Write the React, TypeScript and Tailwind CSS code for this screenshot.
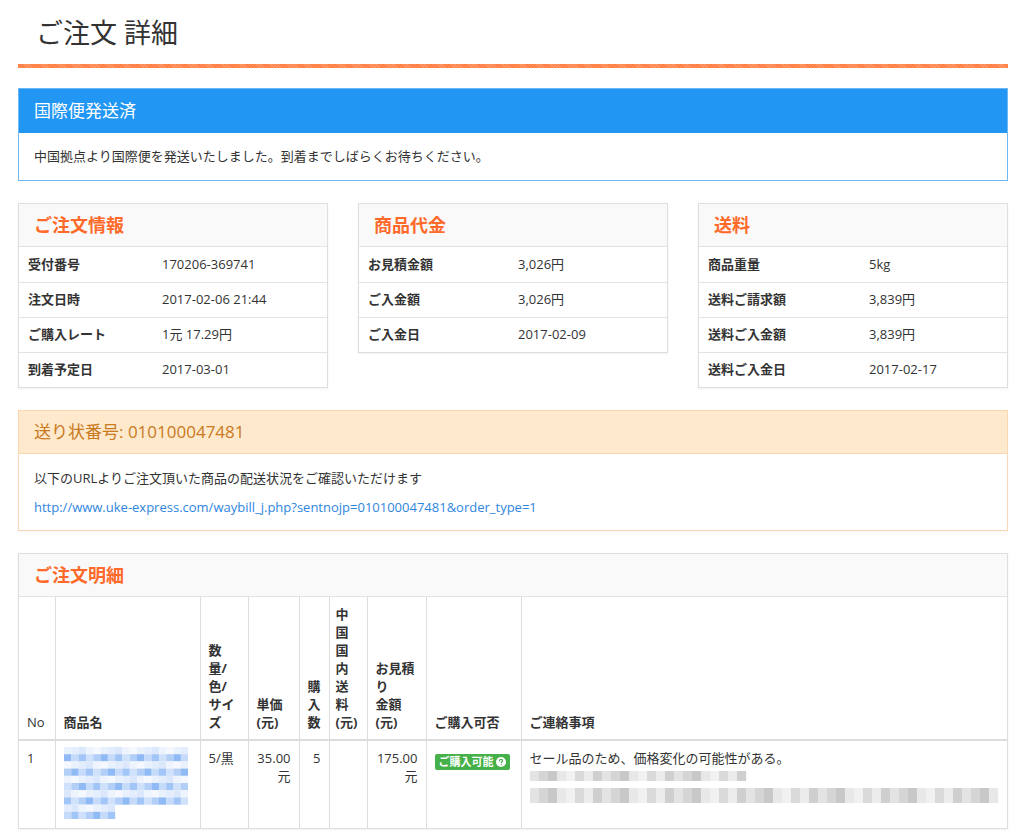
import React from "react";

type Row = { label: string; value: string };

const orderInfo: Row[] = [
  { label: "受付番号", value: "170206-369741" },
  { label: "注文日時", value: "2017-02-06 21:44" },
  { label: "ご購入レート", value: "1元 17.29円" },
  { label: "到着予定日", value: "2017-03-01" },
];

const goodsPrice: Row[] = [
  { label: "お見積金額", value: "3,026円" },
  { label: "ご入金額", value: "3,026円" },
  { label: "ご入金日", value: "2017-02-09" },
];

const shipping: Row[] = [
  { label: "商品重量", value: "5kg" },
  { label: "送料ご請求額", value: "3,839円" },
  { label: "送料ご入金額", value: "3,839円" },
  { label: "送料ご入金日", value: "2017-02-17" },
];

const InfoPanel = ({
  title,
  rows,
  labelWidth,
}: {
  title: string;
  rows: Row[];
  labelWidth: string;
}) => (
  <div className="border border-[#dedede] bg-white shadow-[0_1px_2px_rgba(0,0,0,0.06)]">
    <div className="h-[43px] px-[15px] flex items-center bg-[#f9f9f9] border-b border-[#e3e3e3]">
      <h3 className="text-[18px] font-bold text-[#ff6a2a]">{title}</h3>
    </div>
    {rows.map((r, i) => (
      <div
        key={r.label}
        className={`flex items-center h-[35px] px-[9px] ${i > 0 ? "border-t border-[#e3e3e3]" : ""}`}
      >
        <div className={`${labelWidth} font-bold`}>{r.label}</div>
        <div>{r.value}</div>
      </div>
    ))}
  </div>
);

// pixelated thumbnail of the (blurred) product name
const light = ["#eef4fe", "#e3edfd", "#f5f8fe", "#dbe8fc", "#e9f1fd"];
const strong = ["#c6dbfa", "#b3cff8", "#a2c5f7", "#8fbaf5", "#d0e1fb"];
const BlurName = () => {
  const cells: React.ReactNode[] = [];
  const cols = 17;
  const rows = 10;
  let seed = 7;
  for (let y = 0; y < rows; y++) {
    for (let x = 0; x < cols; x++) {
      if (y >= 8 && x > 6) continue;
      seed = (seed * 9301 + 49297) % 233280;
      const pal = y % 2 === 1 ? strong : light;
      const c = pal[seed % pal.length];
      cells.push(<rect key={`${x}-${y}`} x={x * 7.3} y={y * 7.2} width={7.4} height={7.3} fill={c} />);
    }
  }
  return (
    <svg width="124" height="72" viewBox="0 0 124 72" className="block">
      {cells}
    </svg>
  );
};

const grays = ["#e3e3e3", "#d5d5d5", "#ececec", "#cfcfcf", "#f1f1f1", "#dadada", "#c8c8c8", "#e8e8e8"];
const BlurLine = ({ width, height, seedStart }: { width: number; height: number; seedStart: number }) => {
  const cells: React.ReactNode[] = [];
  let seed = seedStart;
  const n = Math.floor(width / 9);
  for (let x = 0; x < n; x++) {
    seed = (seed * 9301 + 49297) % 233280;
    cells.push(<rect key={x} x={x * 9} y={0} width={9.2} height={height} fill={grays[seed % grays.length]} />);
  }
  return (
    <svg width={width} height={height} viewBox={`0 0 ${width} ${height}`} className="block">
      {cells}
    </svg>
  );
};

const th = "border border-[#dddddd] border-b-2 align-bottom text-left font-bold px-[8px] py-[8px] leading-[18px]";
const td = "border border-[#dddddd] align-top px-[8px] pt-[8px] pb-[8px] leading-[18px]";

export default function App() {
  return (
    <div className="w-[1024px] min-h-[840px] bg-white pl-[18px] pr-[16px] text-[13px] text-[#333] font-['Open_Sans','Noto_Sans_CJK_JP',sans-serif]">
      <h1 className="pt-[13px] pl-[18px] text-[27px] leading-[40px] font-normal text-[#333]">ご注文 詳細</h1>
      <div className="mt-[11px] h-[4px] bg-[#ff7f45] bg-[repeating-linear-gradient(45deg,#ff7a3c_0px,#ff7a3c_1px,#ff9a6a_1px,#ff9a6a_2px)]" />

      <div className="mt-[20px] border border-[#6fb7f4]">
        <div className="h-[44px] bg-[#2196f3] px-[15px] flex items-center">
          <h3 className="text-[17px] text-white">国際便発送済</h3>
        </div>
        <div className="h-[47px] px-[15px] flex items-center">中国拠点より国際便を発送いたしました。到着までしばらくお待ちください。</div>
      </div>

      <div className="mt-[22px] grid grid-cols-3 gap-[30px] items-start">
        <InfoPanel title="ご注文情報" rows={orderInfo} labelWidth="w-[134px]" />
        <InfoPanel title="商品代金" rows={goodsPrice} labelWidth="w-[150px]" />
        <InfoPanel title="送料" rows={shipping} labelWidth="w-[161px]" />
      </div>

      <div className="mt-[22px] border border-[#fad7b3] shadow-[0_1px_2px_rgba(0,0,0,0.04)]">
        <div className="h-[43px] bg-[#fee9cc] border-b border-[#fad7b3] px-[15px] flex items-center">
          <h3 className="text-[17px] text-[#c97a1f]">送り状番号: 010100047481</h3>
        </div>
        <div className="px-[15px] pt-[14px] pb-[13px] leading-[20px]">
          <p>以下のURLよりご注文頂いた商品の配送状況をご確認いただけます</p>
          <p className="mt-[9px]">
            <a className="text-[#2f86de]" href="#">
              http://www.uke-express.com/waybill_j.php?sentnojp=010100047481&amp;order_type=1
            </a>
          </p>
        </div>
      </div>

      <div className="mt-[22px] border border-[#dedede] shadow-[0_1px_2px_rgba(0,0,0,0.06)]">
        <div className="h-[43px] px-[15px] flex items-center bg-[#f9f9f9] border-b border-[#e3e3e3]">
          <h3 className="text-[18px] font-bold text-[#ff6a2a]">ご注文明細</h3>
        </div>
        <table className="w-full table-fixed border-collapse border-hidden">
          <colgroup>
            <col className="w-[36px]" />
            <col className="w-[145px]" />
            <col className="w-[48px]" />
            <col className="w-[51px]" />
            <col className="w-[30px]" />
            <col className="w-[38px]" />
            <col className="w-[59px]" />
            <col className="w-[95px]" />
            <col />
          </colgroup>
          <thead>
            <tr>
              <th className={`${th} !font-normal`}>No</th>
              <th className={th}>商品名</th>
              <th className={th}>
                数<br />量/<br />色/<br />サイ<br />ズ
              </th>
              <th className={th}>
                単価<br />(元)
              </th>
              <th className={th}>
                購<br />入<br />数
              </th>
              <th className={`${th} !px-[6px]`}>
                中<br />国<br />国<br />内<br />送<br />料<br />(元)
              </th>
              <th className={th}>
                お見積<br />り<br />金額<br />(元)
              </th>
              <th className={th}>ご購入可否</th>
              <th className={th}>ご連絡事項</th>
            </tr>
          </thead>
          <tbody>
            <tr className="h-[88px]">
              <td className={td}>1</td>
              <td className={`${td} !pt-[6px]`}>
                <BlurName />
              </td>
              <td className={td}>5/黒</td>
              <td className={`${td} text-right`}>
                35.00
                <br />元
              </td>
              <td className={`${td} text-right`}>5</td>
              <td className={td}></td>
              <td className={`${td} text-right`}>
                175.00
                <br />元
              </td>
              <td className={`${td} pt-[11px]`}>
                <span className="inline-flex items-center gap-[2px] bg-[#46b04a] text-white font-bold text-[11px] leading-[14px] px-[4px] py-[1px] rounded-[2px]">
                  ご購入可能
                  <svg width="10" height="10" viewBox="0 0 16 16">
                    <circle cx="8" cy="8" r="8" fill="white" />
                    <path
                      d="M5.6 6.1c0-1.4 1.1-2.3 2.5-2.3s2.4.9 2.4 2.1c0 1.6-1.9 1.8-1.9 3.3"
                      fill="none"
                      stroke="#46b04a"
                      strokeWidth="1.9"
                      strokeLinecap="round"
                    />
                    <circle cx="8.6" cy="12.2" r="1.1" fill="#46b04a" />
                  </svg>
                </span>
              </td>
              <td className={td}>
                <p>セール品のため、価格変化の可能性がある。</p>
                <div className="mt-[4px]">
                  <BlurLine width={222} height={10} seedStart={3} />
                </div>
                <div className="mt-[7px]">
                  <BlurLine width={472} height={15} seedStart={11} />
                </div>
              </td>
            </tr>
          </tbody>
        </table>
      </div>
    </div>
  );
}
